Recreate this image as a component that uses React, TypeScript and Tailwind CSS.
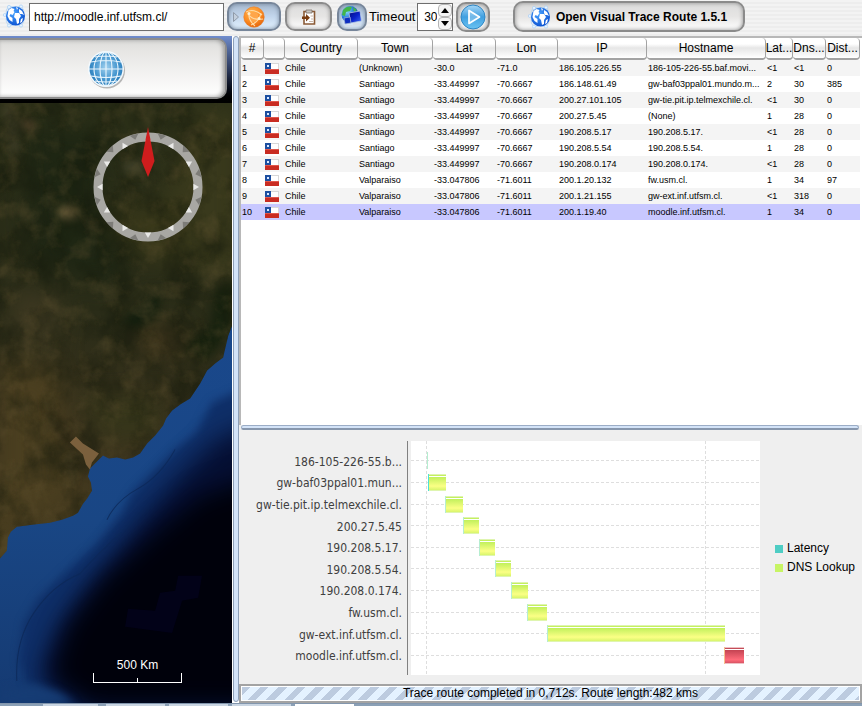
import React from "react";

const hops = [
  ["1", "(Unknown)", "-30.0", "-71.0", "186.105.226.55", "186-105-226-55.baf.movi...", "<1", "<1", "0"],
  ["2", "Santiago", "-33.449997", "-70.6667", "186.148.61.49", "gw-baf03ppal01.mundo.m...", "2", "30", "385"],
  ["3", "Santiago", "-33.449997", "-70.6667", "200.27.101.105", "gw-tie.pit.ip.telmexchile.cl.", "<1", "30", "0"],
  ["4", "Santiago", "-33.449997", "-70.6667", "200.27.5.45", "(None)", "1", "28", "0"],
  ["5", "Santiago", "-33.449997", "-70.6667", "190.208.5.17", "190.208.5.17.", "<1", "28", "0"],
  ["6", "Santiago", "-33.449997", "-70.6667", "190.208.5.54", "190.208.5.54.", "1", "28", "0"],
  ["7", "Santiago", "-33.449997", "-70.6667", "190.208.0.174", "190.208.0.174.", "<1", "28", "0"],
  ["8", "Valparaiso", "-33.047806", "-71.6011", "200.1.20.132", "fw.usm.cl.", "1", "34", "97"],
  ["9", "Valparaiso", "-33.047806", "-71.6011", "200.1.21.155", "gw-ext.inf.utfsm.cl.", "<1", "318", "0"],
  ["10", "Valparaiso", "-33.047806", "-71.6011", "200.1.19.40", "moodle.inf.utfsm.cl.", "1", "34", "0"],
];

const headers = ["#", "", "Country", "Town", "Lat", "Lon", "IP", "Hostname", "Lat...", "Dns...", "Dist..."];

const bars = [
  { label: "186-105-226-55.b...", x: 16, w: 1 },
  { label: "gw-baf03ppal01.mun...", x: 17, w: 18 },
  { label: "gw-tie.pit.ip.telmexchile.cl.", x: 34, w: 18 },
  { label: "200.27.5.45", x: 52, w: 16 },
  { label: "190.208.5.17.", x: 68, w: 16 },
  { label: "190.208.5.54.", x: 84, w: 16 },
  { label: "190.208.0.174.", x: 100, w: 17 },
  { label: "fw.usm.cl.", x: 116, w: 20 },
  { label: "gw-ext.inf.utfsm.cl.", x: 136, w: 178 },
  { label: "moodle.inf.utfsm.cl.", x: 313, w: 20 },
];

function BlueGlobe() {
  return (
    <svg viewBox="0 0 24 24" className="h-6 w-6 shrink-0" aria-hidden="true">
      <defs>
        <radialGradient id="bg" cx="40%" cy="35%" r="70%">
          <stop offset="0" stopColor="#4aa4ff" />
          <stop offset="1" stopColor="#0a4fd0" />
        </radialGradient>
      </defs>
      <g fill="none" stroke="#b5d7f5" strokeWidth="0.8">
        <ellipse cx="12" cy="12" rx="11" ry="7" transform="rotate(50 12 12)" />
        <ellipse cx="12" cy="12" rx="11" ry="7" transform="rotate(-50 12 12)" />
      </g>
      <g fill="#e6f3ff" stroke="#a9cff3" strokeWidth="0.7">
        <circle cx="6" cy="3" r="1.6" />
        <circle cx="18" cy="2.5" r="1.6" />
        <circle cx="1.8" cy="11" r="1.5" />
        <circle cx="6" cy="21.500" r="1.6" />
        <circle cx="18" cy="21.500" r="1.6" />
      </g>
      <circle cx="12.5" cy="12" r="9.5" fill="url(#bg)" />
      <path d="M5.500 6l3-2 3 1-1 2 1 1-2 3-2-1-1 2 3 2 0 4-3-2-2-4zM13 3l2 1-1 2zM12 9l4 0 2 3-2 3 0 4-2 1-1-5-2-2zM16 5l3 2 2 4-2-1-2 0-1-2zM18 15l2-1-1 4-2 1z" fill="#fff" />
    </svg>
  );
}

function OrangeGlobe() {
  return (
    <svg viewBox="0 0 22 22" className="h-[22px] w-[22px]" aria-hidden="true">
      <defs>
        <radialGradient id="og" cx="40%" cy="30%" r="75%">
          <stop offset="0" stopColor="#ffb650" />
          <stop offset="0.6" stopColor="#fb8a22" />
          <stop offset="1" stopColor="#e0610c" />
        </radialGradient>
      </defs>
      <circle cx="11" cy="11" r="10.3" fill="url(#og)" />
      <path d="M5 8q5-4 10 0 1 5-3 9-6-2-7-9z" fill="#ffa64a" />
      <path d="M3 6q8-4 16 3M6 7q-1 7 6 13M18 7q-2 9-10 12M5 8q5 7 15 5" fill="none" stroke="#ffdca8" strokeWidth="1.1" />
      <circle cx="6" cy="7.500" r="1.500" fill="#fff0d2" />
      <circle cx="16" cy="12.500" r="1.500" fill="#fff0d2" />
      <circle cx="11" cy="11" r="10.2" fill="none" stroke="#e8832d" strokeWidth="0.6" />
    </svg>
  );
}

function ClipboardIcon() {
  return (
    <svg viewBox="0 0 14 16" className="h-4 w-3.5" aria-hidden="true">
      <path d="M2 2.500h10.500v12.500H2z" fill="#fff" stroke="#8a5a35" strokeWidth="1.6" />
      <path d="M4 1h6v3H4z" fill="#c9c5c0" stroke="#7b6f66" strokeWidth="0.8" />
      <path d="M0 7.500h4V5L8 8.700 4 12.500V10H0z" fill="#7a3d12" />
      <path d="M8.5 7h2.5M9 10h2M7 12.5h4" stroke="#c9b7aa" />
    </svg>
  );
}

function NetworkIcon() {
  return (
    <svg viewBox="0 0 24 24" className="h-6 w-6" aria-hidden="true">
      <defs>
        <radialGradient id="ng" cx="30%" cy="30%" r="75%">
          <stop offset="0" stopColor="#8fe0ff" />
          <stop offset="0.6" stopColor="#1c72d8" />
          <stop offset="1" stopColor="#063a94" />
        </radialGradient>
        <linearGradient id="ns" x2="1" y2="1">
          <stop offset="0" stopColor="#040b78" />
          <stop offset="0.5" stopColor="#0a22c8" />
          <stop offset="1" stopColor="#3f6cf5" />
        </linearGradient>
      </defs>
      <circle cx="10" cy="9.500" r="8.500" fill="url(#ng)" />
      <path d="M3 5c3-4 7-4 9-3l-2 4-4 1-1 4-3-1zM13 2l4 3-3 2z" fill="#43b649" />
      <path d="M9 8l11-2 1.500 10-11 2z" fill="url(#ns)" stroke="#b9cae4" strokeWidth="0.8" />
      <path d="M13 18h6l2 2.500h-8z" fill="#d7dee8" />
      <path d="M4 13l6-1 1 6-6 1z" fill="#0b2cc0" stroke="#a7b8d2" strokeWidth="0.7" />
      <path d="M5 20h7l1 1.500H5z" fill="#d7dee8" />
    </svg>
  );
}

function PlayIcon() {
  return (
    <svg viewBox="0 0 26 26" className="h-[26px] w-[26px]" aria-hidden="true">
      <defs>
        <linearGradient id="pg" x2="0" y2="1">
          <stop offset="0" stopColor="#a5d6f6" />
          <stop offset="0.5" stopColor="#3f9fe0" />
          <stop offset="1" stopColor="#6cc4f2" />
        </linearGradient>
      </defs>
      <circle cx="13" cy="13" r="12" fill="url(#pg)" stroke="#2f86c4" />
      <path d="M9 6.5v13l10.5-6.5z" fill="#ffffff" fillOpacity="0.25" stroke="#fff" strokeWidth="1.7" strokeLinejoin="round" />
    </svg>
  );
}

function GridGlobe() {
  return (
    <svg viewBox="0 0 40 40" className="h-10 w-10" aria-hidden="true">
      <defs>
        <radialGradient id="gg" cx="50%" cy="45%" r="60%">
          <stop offset="0" stopColor="#9fd0ee" />
          <stop offset="0.6" stopColor="#4596cf" />
          <stop offset="1" stopColor="#2577b5" />
        </radialGradient>
      </defs>
      <circle cx="21" cy="21.500" r="18" fill="#8a8a8a" opacity="0.6" />
      <circle cx="20" cy="20" r="18" fill="#f4fafe" />
      <circle cx="20" cy="20" r="16.5" fill="url(#gg)" />
      <g fill="none" stroke="#eaf6fd" strokeWidth="1.1">
        <path d="M20 3v34M3 20h34M5 13q15-3 30 0M5 27q15 3 30 0M9 8q11-2 22 0M9 32q11 2 22 0" />
        <ellipse cx="20" cy="20" rx="6" ry="17" />
        <ellipse cx="20" cy="20" rx="12" ry="17" />
      </g>
    </svg>
  );
}

function Flag() {
  return (
    <svg viewBox="0 0 15 11" className="block h-[11px] w-[15px]" role="img" aria-label="Chile">
      <path d="M0 0h14v11H0z" fill="#d8d8d8" />
      <path d="M5 1h8v5H5z" fill="#fff" />
      <path d="M0 0h6v6H0z" fill="#1d4fa0" />
      <path d="M0 6h14v5H0z" fill="#c92c22" />
      <path d="M0 6h14v1H0z" fill="#e0574c" />
      <path d="M2 2h2v2H2z" fill="#dbe8ff" />
    </svg>
  );
}

const LAND =
  "M0 103H232V325L228 335 223 357 215 363 207 370 200 383 190 398 180 404 172 410 166 418 163 425 155 435 147 443 140 453 133 457 125 459 117 457 109 458 103 455 96 462 90 468 88 476 91 482 92 490 87 498 83 503 78 512 73 515 62 519 50 522 32 524 17 526 11 531 8 537 7 550 0 558Z";

function Satellite() {
  return (
    <svg viewBox="0 103 232 599" preserveAspectRatio="xMidYMid slice" className="absolute inset-0 h-full w-full" aria-hidden="true">
      <defs>
        <linearGradient id="land" x1="0.3" y1="0" x2="0.2" y2="1">
          <stop offset="0" stopColor="#2b2f18" />
          <stop offset="0.45" stopColor="#2a2c18" />
          <stop offset="0.7" stopColor="#3b331d" />
          <stop offset="1" stopColor="#4a3e1f" />
        </linearGradient>
        <linearGradient id="shelf" x2="0" y2="1">
          <stop offset="0" stopColor="#1a4a94" />
          <stop offset="0.7" stopColor="#194684" />
          <stop offset="1" stopColor="#153a72" />
        </linearGradient>
        <filter id="soft4" x="-30%" y="-30%" width="160%" height="160%" colorInterpolationFilters="sRGB">
          <feGaussianBlur stdDeviation="4" />
        </filter>
        <filter id="soft12" x="-30%" y="-30%" width="160%" height="160%" colorInterpolationFilters="sRGB">
          <feGaussianBlur stdDeviation="12" />
        </filter>
        <filter id="terrain" x="0" y="0" width="100%" height="100%" colorInterpolationFilters="sRGB">
          <feTurbulence type="fractalNoise" baseFrequency="0.03 0.025" numOctaves="6" seed="8" />
          <feColorMatrix values="0 0 0 0 0.07  0 0 0 0 0.09  0 0 0 0 0.04  2.6 0 0 0 -1.05" />
        </filter>
        <filter id="dust" x="0" y="0" width="100%" height="100%" colorInterpolationFilters="sRGB">
          <feTurbulence type="fractalNoise" baseFrequency="0.05" numOctaves="6" seed="21" />
          <feColorMatrix values="0 0 0 0 0.40  0 0 0 0 0.34  0 0 0 0 0.20  0 2.4 0 0 -1.1" />
        </filter>
        <clipPath id="coast">
          <path d={LAND} />
        </clipPath>
      </defs>
      <path d="M0 103H232V702H0Z" fill="url(#shelf)" />
      <path d="M250 385L212 402 196 432 175 449 150 474 132 492 122 512 95 545 62 575 38 598 24 622 19 660 28 683 60 695 82 715H250Z" fill="#0f2f68" filter="url(#soft4)" />
      <path d="M260 420L215 440 175 480 145 515 115 555 80 597 58 630 42 668 45 685 80 702 95 720H260Z" fill="#050f33" filter="url(#soft12)" />
      <path d="M260 475L200 495 155 532 104 578 68 625 52 675 90 704H260Z" fill="#00010b" filter="url(#soft12)" />
      <path d="M178 575H202L198 597 182 600 172 632 125 626 128 608 155 610 160 592 175 590Z" fill="#020218" />
      <path d="M107 519Q116 500 138 488T175 449M17 680Q15 640 34 612T80 573Q98 553 121 532" fill="none" stroke="#0c2858" strokeWidth="1" opacity="0.8" />
      <path d="M0 702V690L34 683 60 692 75 703Z" fill="#163c74" filter="url(#soft4)" />
      <g clipPath="url(#coast)">
        <path d="M0 103H232V560H0Z" fill="url(#land)" />
        <g filter="url(#soft12)">
          <path d="M20 120L110 130 100 210 130 270 100 285 30 260Z" fill="#1b2413" opacity="0.8" />
          <path d="M190 110H240V280L200 270 150 250Z" fill="#39391c" />
          <path d="M100 210L180 200 190 260 140 260Z" fill="#363619" />
          <path d="M10 285L60 300 55 350 15 340Z" fill="#3d3821" />
          <path d="M145 325L185 330 180 355 135 350Z" fill="#4e3e22" />
          <path d="M0 360L60 370 70 500 0 520Z" fill="#4b3f20" />
          <path d="M80 395L160 395 160 440 100 440Z" fill="#35351a" />
        </g>
        <g filter="url(#soft4)">
          <path d="M55 210L70 204 80 215 66 220Z" fill="#74633f" />
          <path d="M20 118L33 121 36 131 25 130Z" fill="#5f4b30" />
          <path d="M0 103L14 106 20 140 18 165 10 150Z" fill="#47432c" opacity="0.7" />
          <path d="M160 284L158 315 135 328 120 322 145 302Z" fill="#141f0f" />
          <path d="M215 290L232 282V330L205 360 185 345 210 325Z" fill="#18220f" />
          <path d="M42 400L52 412 72 438 68 444 50 420Z" fill="#211f10" />
          <path d="M122 162L145 160 142 174 125 172Z" fill="#41412a" />
        </g>
        <path d="M0 103H232V560H0Z" filter="url(#terrain)" opacity="0.5" />
        <path d="M0 103H232V560H0Z" filter="url(#dust)" opacity="0.35" />
      </g>
      <path d="M70 442L76 436 83 443 99 453 92 462 90 469 86 464 83 454Z" fill="#7b603d" />
    </svg>
  );
}

function Compass() {
  const ticks = Array.from({ length: 12 }, (_, i) => i * 30);
  return (
    <svg viewBox="0 0 110 118" className="absolute left-[93px] top-[24px] h-[118px] w-[110px]" role="img" aria-label="Compass">
      <circle cx="55" cy="60" r="50" fill="none" stroke="#a8a7a3" strokeWidth="9" />
      {ticks.map((a) => (
        <g key={a} transform={`rotate(${a} 55 60)`}>
          <path d="M51.8 14.6h6.4L55 9z" fill="#e9e9e7" />
          <path d="M50.500 5.800h9L55 11z" fill="#7d7c78" transform="rotate(15 55 60)" />
        </g>
      ))}
      <path d="M55 0L61.5 34 55 50 48.5 34Z" fill="#cf1d1d" />
    </svg>
  );
}

function RouteChart() {
  return (
    <section className="flex items-start bg-[#efefef] pb-[9px] pt-[11px]" aria-label="Route timing">
      <ul className="grid h-[234px] w-[169px] shrink-0 auto-rows-fr border-r border-[#808080] pb-2 pr-[5px] pt-2.5 text-right font-['DejaVu_Sans_Condensed','Noto_Sans',sans-serif] text-xs text-[#404040]">
        {bars.map((b) => (
          <li key={b.label} className="flex items-center justify-end whitespace-nowrap">
            {b.label}
          </li>
        ))}
      </ul>
      <div className="ml-[3px] min-w-0 flex-1 bg-white">
        <svg viewBox="0 0 349 234" preserveAspectRatio="none" className="block h-[234px] w-full" role="img" aria-label="Latency and DNS lookup per hop">
          <defs>
            <linearGradient id="lime" x2="0" y2="1">
              <stop offset="0" stopColor="#c1f05c" />
              <stop offset="0.7" stopColor="#fbff85" />
              <stop offset="1" stopColor="#d8f56c" />
            </linearGradient>
            <linearGradient id="red" x2="0" y2="1">
              <stop offset="0" stopColor="#c44352" />
              <stop offset="0.75" stopColor="#ff6b7a" />
              <stop offset="1" stopColor="#d95464" />
            </linearGradient>
          </defs>
          <g stroke="#dedede" strokeDasharray="3 2">
            <path d="M15.5 0V234M294.5 0V234" />
            {bars.map((b, i) => (
              <path key={b.label} d={`M0 ${Math.round(19.4 + i * 21.6) + 0.5}H349`} />
            ))}
          </g>
          {bars.map((b, i) => {
            const y = Math.round(11.4 + i * 21.6);
            const last = i === 9;
            return (
              <g key={b.label}>
                <rect x={b.x} y={y} width={b.w} height="17" fill={last ? "#eec0c4" : "#dff5b0"} />
                <rect x={b.x} y={y + 1} width={b.w} height="1" fill={last ? "#c44d58" : "#c4f05f"} />
                <rect x={b.x} y={y + 2} width={b.w} height="1" fill="#ffffff" />
                <rect x={b.x} y={y + 3} width={b.w} height="13" fill={last ? "url(#red)" : "url(#lime)"} />
                <rect x={b.x} y={y} width="1" height="17" fill={last ? "#f6c08e" : i === 1 ? "#4ee0d8" : "#b5eed0"} />
              </g>
            );
          })}
        </svg>
      </div>
      <ul className="mt-[98px] w-[102px] shrink-0 pl-[15px] text-xs leading-[19px] text-black">
        <li className="flex items-center gap-1 whitespace-nowrap">
          <span className="h-2 w-2 bg-[#4ecdc4]" />
          Latency
        </li>
        <li className="flex items-center gap-1 whitespace-nowrap">
          <span className="h-2 w-2 bg-[#c7f464]" />
          DNS Lookup
        </li>
      </ul>
    </section>
  );
}

const pill =
  "flex shrink-0 items-center justify-center rounded-[10px] border-2 border-[#8b8b8b] bg-linear-to-b from-[#dcdcdc] via-[#e6e5e4] to-[#ffffff] shadow-[inset_0_0_4px_#8c8c8c]";
const bluePill =
  "flex shrink-0 items-center justify-center rounded-[10px] border-2 border-[#77869a] bg-linear-to-b from-[#a8bad0] via-[#c3d6ec] to-[#e3f2ff] shadow-[inset_0_0_4px_#75879d]";

function Toolbar() {
  return (
    <header className="flex h-9 items-start bg-[repeating-linear-gradient(to_bottom,#f3f3f3_0,#f3f3f3_2px,#ededed_2px,#ededed_4px)] pl-[3px] pt-0.5">
      <span className="mr-0.5 mt-0.5">
        <BlueGlobe />
      </span>
      <input
        aria-label="Address"
        defaultValue="http://moodle.inf.utfsm.cl/"
        className="mt-px h-7 w-[195px] min-w-0 border border-[#6e6e6e] bg-white px-1 text-xs text-black outline-none"
      />
      <button aria-label="Trace my route" className={`${bluePill} relative ml-[3px] h-[29px] w-[54px]`}>
        <svg viewBox="0 0 6 10" className="absolute left-1 top-2 h-2.5 w-1.5" aria-hidden="true">
          <path d="M0.5 0.5v9L5.5 5z" fill="#c4cfdc" stroke="#8f9aa8" />
        </svg>
        <OrangeGlobe />
      </button>
      <button aria-label="Paste" className={`${pill} ml-1 h-[29px] w-[47px]`}>
        <ClipboardIcon />
      </button>
      <button aria-label="Network" className={`${bluePill} ml-[5px] mt-px h-7 w-[30px]`}>
        <NetworkIcon />
      </button>
      <label htmlFor="timeout" className="ml-0.5 text-[13px] leading-[30px] text-black">
        Timeout
      </label>
      <div className="ml-0.5 mt-px flex h-7 w-9 border border-[#6e6e6e] bg-white">
        <input id="timeout" defaultValue="30" className="w-5 min-w-0 pr-px text-right text-xs text-black outline-none" />
        <div className="flex flex-1 flex-col">
          <button aria-label="Increase" className="flex flex-1 items-center justify-center rounded-sm border border-[#b5b5b5] bg-[#f4f4f4]">
            <span className="border-x-[4px] border-b-[5px] border-x-transparent border-b-black" />
          </button>
          <button aria-label="Decrease" className="flex flex-1 items-center justify-center rounded-sm border border-[#b5b5b5] bg-[#f4f4f4]">
            <span className="border-x-[4px] border-t-[5px] border-x-transparent border-t-black" />
          </button>
        </div>
      </div>
      <button aria-label="Start" className={`${pill} ml-[3px] h-[30px] w-[34px]`}>
        <PlayIcon />
      </button>
      <button className={`${pill} -mt-px ml-[23px] h-[31px] w-[232px] gap-1 pr-1 text-xs font-bold text-black`}>
        <BlueGlobe />
        Open Visual Trace Route 1.5.1
      </button>
    </header>
  );
}

function HopTable() {
  return (
    <div className="flex-1 border-l-2 border-t-2 border-[#b8b8b8] bg-white pr-[3px]">
      <table className="w-full table-fixed border-collapse text-black">
        <colgroup>
          <col className="w-[23px]" />
          <col className="w-[21px]" />
          <col className="w-[73px]" />
          <col className="w-[75px]" />
          <col className="w-[63px]" />
          <col className="w-[62px]" />
          <col className="w-[89px]" />
          <col className="w-[119px]" />
          <col className="w-[27px]" />
          <col className="w-[33px]" />
          <col className="w-[34px]" />
        </colgroup>
        <thead>
          <tr>
            {headers.map((h, i) => (
              <th key={i} scope="col" className="h-[22px] p-0 font-normal">
                <div className="flex h-[22px] items-center justify-center whitespace-nowrap rounded-sm border-b-2 border-r border-[#a3a3a3] bg-linear-to-b from-[#ffffff] from-30% via-[#e6e6e6] via-50% to-[#ffffff] text-xs">
                  {h}
                </div>
              </th>
            ))}
          </tr>
        </thead>
        <tbody className="text-[9px] leading-4">
          {hops.map(([n, ...rest], i) => (
            <tr key={n} className={i === 9 ? "bg-[#c8c8ff]" : i % 2 === 0 ? "bg-[#f4f4f4]" : "bg-white"}>
              <td className="h-4 p-0 pl-px">{n}</td>
              <td className="p-0 pl-px">
                <Flag />
              </td>
              <td className="p-0">Chile</td>
              {rest.map((v, j) => (
                <td key={j} className="whitespace-nowrap p-0 pl-px">
                  {v}
                </td>
              ))}
            </tr>
          ))}
        </tbody>
      </table>
    </div>
  );
}

export default function App() {
  return (
    <div className="flex min-h-screen flex-col bg-[#efefef] font-['Liberation_Sans',Arial,sans-serif]">
      <Toolbar />
      <main className="flex flex-1">
        <aside className="flex w-[232px] shrink-0 flex-col">
          <div className="h-[67px] bg-linear-to-b from-[#6f8ccc] via-[#2c3a5c] to-[#000000] pr-[5px] pt-0.5">
            <div className="flex h-[61px] items-center justify-center rounded-r-[10px] border-b-2 border-r-2 border-t-2 border-[#8d8d8d] bg-linear-to-b from-[#dcdcda] via-[#e7e6e4] via-20% to-[#ffffff] pr-3.5 shadow-[inset_-2px_0_4px_#9a9a9a]">
              <GridGlobe />
            </div>
          </div>
          <div className="relative flex-1 overflow-hidden bg-[#00010b]">
            <Satellite />
            <Compass />
            <div className="absolute bottom-5 left-[93px] w-[89px] text-center text-xs leading-4 text-white">
              500 Km
              <div className="flex h-2.5 items-end justify-center border-x border-b border-white">
                <span className="h-1 w-px bg-white" />
              </div>
            </div>
          </div>
        </aside>
        <div className="w-[7px] shrink-0 border-l border-white bg-white pb-px">
          <div className="h-full rounded-md border border-[#8ea0b8] bg-[#d3e3f8]" />
        </div>
        <div className="flex min-w-0 flex-1 flex-col">
          <HopTable />
          <div className="flex h-[5px] shrink-0 pl-0.5 pr-[3px]">
            <div className="flex-1 rounded-full border border-b-2 border-[#9cadc6] border-b-[#8797ad] bg-[#d3e3f8]" />
          </div>
          <RouteChart />
          <div className="border-2 border-[#a3a3a3] bg-white p-px">
            <div
              role="status"
              className="bg-[repeating-linear-gradient(135deg,#bccbdf_0,#bccbdf_6px,#e4f2ff_6px,#e4f2ff_13px)] text-center text-xs leading-[13px] text-black"
            >
              Trace route completed in 0,712s. Route length:482 kms
            </div>
          </div>
        </div>
      </main>
      <footer className="flex h-[3px] gap-1 overflow-hidden border-t border-[#8296ad] bg-[#8ba0b6] pl-[43px]">
        <span className="w-[55px] bg-[#c9d5e2]" />
        <span className="ml-1 w-[59px] bg-[#c9d5e2]" />
        <span className="w-[59px] bg-[#c9d5e2]" />
        <span className="w-[59px] bg-[#c9d5e2]" />
        <span className="w-[59px] bg-[#ffffff]" />
      </footer>
    </div>
  );
}
